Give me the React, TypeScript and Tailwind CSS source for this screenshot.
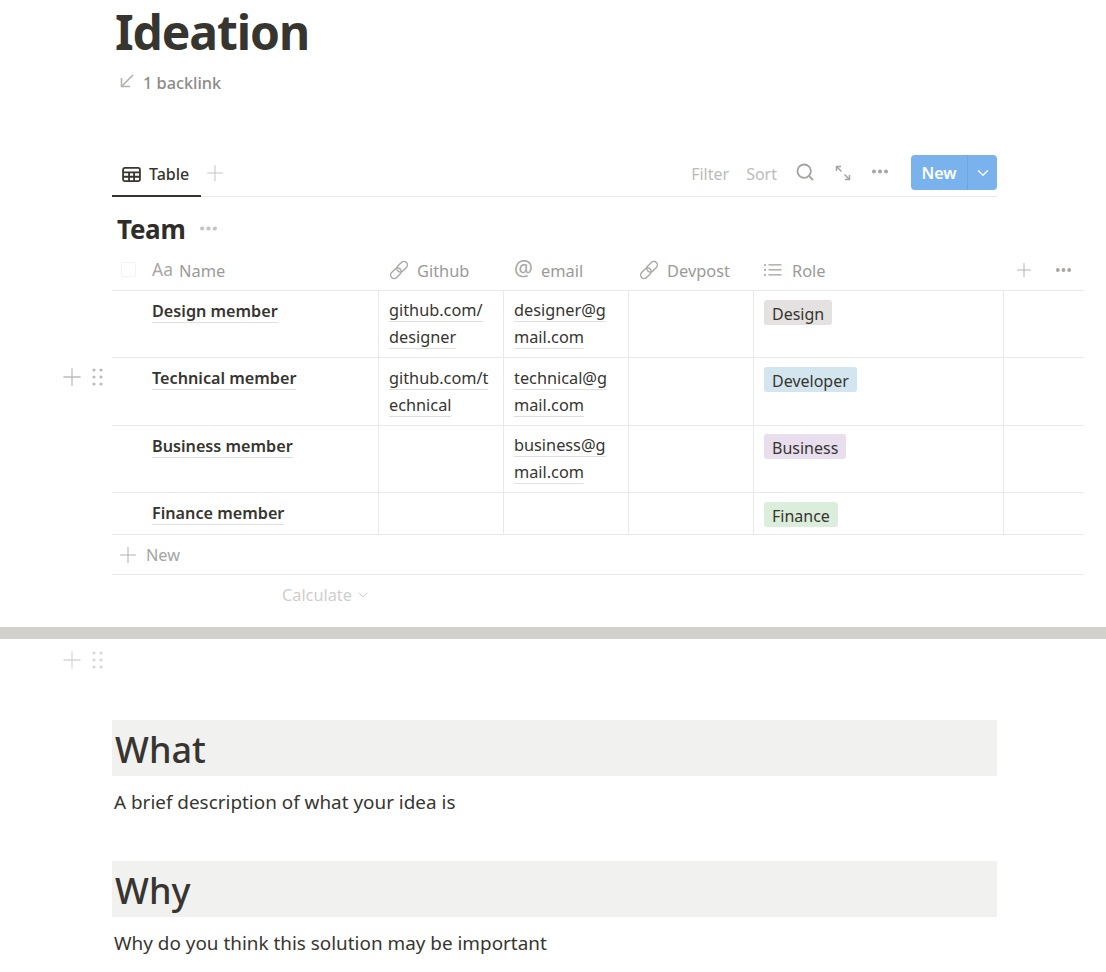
import React from 'react';
import { ChevronDown, Plus, Search } from 'lucide-react';

const font = "font-['Noto_Sans','Open_Sans',sans-serif]";

function Dots({ className = '' }: { className?: string }) {
    return (
        <svg viewBox="0 0 18 4" className={className} fill="currentColor">
            <circle cx="3" cy="2" r="2" />
            <circle cx="9" cy="2" r="2" />
            <circle cx="15" cy="2" r="2" />
        </svg>
    );
}

function Grip({ className = '' }: { className?: string }) {
    return (
        <svg viewBox="0 0 11 18" className={className} fill="currentColor">
            <circle cx="2" cy="2" r="1.6" />
            <circle cx="9" cy="2" r="1.6" />
            <circle cx="2" cy="9" r="1.6" />
            <circle cx="9" cy="9" r="1.6" />
            <circle cx="2" cy="16" r="1.6" />
            <circle cx="9" cy="16" r="1.6" />
        </svg>
    );
}

function LinkIcon() {
    return (
        <svg viewBox="0 0 20 20" className="w-[20px] h-[20px] -mt-[3px] text-[#a8a7a4]" fill="none" stroke="currentColor" strokeWidth="1.4">
            <rect x="9.6" y="0.8" width="7" height="12" rx="3.5" transform="rotate(45 13.1 6.8)" />
            <rect x="3.4" y="7.2" width="7" height="12" rx="3.5" transform="rotate(45 6.9 13.2)" />
        </svg>
    );
}

function ListIcon() {
    return (
        <svg viewBox="0 0 18 14" className="w-[18px] h-[14px] -mt-[3px] text-[#b5b4b1]" fill="currentColor">
            <rect x="0" y="1" width="2" height="2" />
            <rect x="0" y="6" width="2" height="2" />
            <rect x="0" y="11" width="2" height="2" />
            <rect x="4.5" y="1" width="13" height="1.6" />
            <rect x="4.5" y="6" width="13" height="1.6" />
            <rect x="4.5" y="11" width="13" height="1.6" />
        </svg>
    );
}

function TableIcon() {
    return (
        <svg viewBox="0 0 20 16" className="w-[19px] h-[15px] text-[#37352f]" fill="none" stroke="currentColor" strokeWidth="1.9">
            <rect x="1" y="1" width="18" height="14" rx="2" />
            <path d="M1 5.8h18M1 10.4h18M7.4 5.8V15M12.8 5.8V15" />
        </svg>
    );
}

function Link({ children }: { children: React.ReactNode }) {
    return <span className="border-b border-[#dfdfde] break-all">{children}</span>;
}

const rows = [
    { name: 'Design member', github: 'github.com/ designer', email: 'designer@gmail.com', role: 'Design', tag: 'bg-[#e3e2e0]', h: 'h-[67px]', cell: 'pt-[6px]', tagTop: 'pt-[9px]' },
    { name: 'Technical member', github: 'github.com/technical', email: 'technical@gmail.com', role: 'Developer', tag: 'bg-[#d3e5ef]', h: 'h-[68px]', cell: 'pt-[7px]', tagTop: 'pt-[9px]' },
    { name: 'Business member', github: '', email: 'business@gmail.com', role: 'Business', tag: 'bg-[#e8deee]', h: 'h-[67px]', cell: 'pt-[6px]', tagTop: 'pt-[8px]' },
    { name: 'Finance member', github: '', email: '', role: 'Finance', tag: 'bg-[#dbeddb]', h: 'h-[42px]', cell: 'pt-[7px]', tagTop: 'pt-[9px]' },
];

export default function App() {
    return (
        <div className={`${font} relative w-[1106px] h-[972px] overflow-hidden bg-white text-[#37352f]`}>
            <div className="pl-[112px]">
                {/* Title */}
                <h1 className="pl-[3px] pt-[2px] h-[60px] text-[48px] leading-[60px] font-bold tracking-[-1.1px] text-[#37352f]">Ideation</h1>
                <div className="flex items-center h-[28px] mt-[9px] pl-[8px] text-[16.3px] font-medium text-[#8c8b87]">
                    <svg viewBox="0 0 14 14" className="w-[14px] h-[14px] -mt-[4px] text-[#b3b2af]" fill="none" stroke="currentColor" strokeWidth="1.6">
                        <path d="M13 1 2 12M1.5 4v8.5H10" />
                    </svg>
                    <span className="ml-[9px]">1 backlink</span>
                </div>

                {/* Tabs and toolbar */}
                <div className="w-[885px] h-[42px] mt-[58px] flex justify-between border-b border-[#e9e9e7]">
                    <div className="flex">
                        <div className="w-[89px] h-[42px] pl-[10px] pb-[2px] flex items-center gap-[8px] border-b-2 border-[#37352f] text-[16px] font-medium">
                            <TableIcon />
                            <span>Table</span>
                        </div>
                        <Plus className="w-[26px] h-[26px] ml-[1px] mt-[5px] text-[#c8c7c5]" strokeWidth={1} />
                    </div>
                    <div className="flex items-start text-[16px] text-[#bcbbb9]">
                        <span className="mt-[7px] leading-[24px]">Filter</span>
                        <span className="ml-[17px] mt-[7px] leading-[24px]">Sort</span>
                        <Search className="w-[20px] h-[20px] ml-[18px] mt-[7px] text-[#a5a4a1]" strokeWidth={2.2} />
                        <svg viewBox="0 0 16 16" className="w-[16px] h-[16px] ml-[20px] mt-[10px] text-[#a5a4a1]" fill="none" stroke="currentColor" strokeWidth="1.5">
                            <path d="M1.5 6V1.5H6M1.5 1.5l5 5M14.5 10v4.5H10M14.5 14.5l-5-5" />
                        </svg>
                        <Dots className="w-[18px] h-[5px] ml-[20px] mt-[14px] text-[#a5a4a1]" />
                        <div className="ml-[22px] mt-[0px] w-[86px] h-[35px] flex rounded-[4px] bg-[#79b2ec] text-white">
                            <span className="w-[56px] text-center leading-[37px] font-semibold">New</span>
                            <span className="flex-1 border-l border-[#6ea5dc] flex items-center justify-center">
                                <ChevronDown className="w-[18px] h-[18px]" strokeWidth={1.8} />
                            </span>
                        </div>
                    </div>
                </div>

                {/* Table title */}
                <div className="flex items-center h-[54px] pl-[5px] pt-[10px]">
                    <span className="text-[26px] font-bold text-[#2f2d29] tracking-[-0.3px]">Team</span>
                    <Dots className="w-[19px] h-[5px] ml-[14px] -mt-[1px] text-[#c5c4c2]" />
                </div>

                {/* Table */}
                <div className="w-[972px] text-[16.3px]">
                    <div className="flex h-[40px] pt-[2px] border-b border-[#e9e9e7] text-[16.4px] text-[#9b9a97]">
                        <div className="w-[266px] flex items-center pl-[9px] relative">
                            <span className="w-[15px] h-[15px] border border-[#f3f3f2] rounded-[2px] -mt-[5px]" />
                            <span className="ml-[16px] text-[17.5px] text-[#a8a7a4] -mt-[4px]">Aa</span>
                            <span className="ml-[6px]">Name</span>
                        </div>
                        <div className="w-[125px] flex items-center pl-[11px] gap-[8px]"><LinkIcon /><span>Github</span></div>
                        <div className="w-[125px] flex items-center pl-[11px] gap-[8px]">
                            <span className="text-[21px] leading-none text-[#a8a7a4] -mt-[6px]">@</span>
                            <span>email</span>
                        </div>
                        <div className="w-[125px] flex items-center pl-[11px] gap-[8px]"><LinkIcon /><span>Devpost</span></div>
                        <div className="w-[250px] flex items-center pl-[11px] gap-[10px]"><ListIcon /><span>Role</span></div>
                        <div className="flex-1 flex items-center -mt-[3px]">
                            <Plus className="w-[22px] h-[22px] ml-[10px] text-[#b3b2af]" strokeWidth={1.1} />
                            <Dots className="w-[17px] h-[4px] ml-[20px] text-[#a5a4a1]" />
                        </div>
                    </div>

                    {rows.map((r) => (
                        <div key={r.name} className={`flex ${r.h} border-b border-[#e9e9e7] leading-[27px]`}>
                            <div className="w-[266px] pl-[40px] pt-[7px] text-[16.2px] font-semibold text-[#37352f]">
                                <span className="border-b border-[#dfdfde]">{r.name}</span>
                            </div>
                            <div className={`w-[125px] border-l border-[#e9e9e7] pl-[10px] pr-[10px] ${r.cell}`}>
                                {r.github && <Link>{r.github}</Link>}
                            </div>
                            <div className={`w-[125px] border-l border-[#e9e9e7] pl-[10px] pr-[10px] ${r.cell}`}>
                                {r.email && <Link>{r.email}</Link>}
                            </div>
                            <div className="w-[125px] border-l border-[#e9e9e7]" />
                            <div className={`w-[250px] border-l border-[#e9e9e7] pl-[10px] ${r.tagTop}`}>
                                <span className={`inline-block h-[25px] px-[8px] rounded-[3px] text-[16px] leading-[28px] ${r.tag}`}>{r.role}</span>
                            </div>
                            <div className="flex-1 border-l border-[#e9e9e7]" />
                        </div>
                    ))}

                    <div className="flex items-center h-[40px] border-b border-[#e9e9e7] pl-[3px] text-[#a5a4a1]">
                        <Plus className="w-[26px] h-[26px] text-[#b3b2af]" strokeWidth={1} />
                        <span className="ml-[5px] mt-[1px]">New</span>
                    </div>
                    <div className="flex items-center h-[40px] pl-[170px] text-[#cfcecc]">
                        <span>Calculate</span>
                        <ChevronDown className="w-[16px] h-[16px] ml-[3px]" strokeWidth={1.4} />
                    </div>
                </div>
            </div>

            {/* Divider */}
            <div className="h-[12px] mt-[12px] bg-[#d2d1cb]" />

            {/* Sections */}
            <div className="pl-[112px] pt-[81px]">
                <div className="w-[885px] h-[56px] pl-[3px] bg-[#f1f1ef] text-[36px] leading-[60px] font-medium text-[#37352f]">What</div>
                <p className="pl-[2px] mt-[11px] text-[18.9px] leading-[30px]">A brief description of what your idea is</p>
                <div className="w-[885px] h-[56px] pl-[3px] mt-[44px] bg-[#f1f1ef] text-[36px] leading-[60px] font-medium text-[#37352f]">Why</div>
                <p className="pl-[2px] mt-[11px] text-[18.9px] leading-[30px]">Why do you think this solution may be important</p>
            </div>

            {/* Hover handles in the page gutter */}
            <div className="absolute left-[58px] top-[363px] flex items-center gap-[6px] text-[#bdbcba]">
                <Plus className="w-[28px] h-[28px]" strokeWidth={1.1} />
                <Grip className="w-[11px] h-[18px]" />
            </div>
            <div className="absolute left-[58px] top-[646px] flex items-center gap-[6px] text-[#d9d8d6]">
                <Plus className="w-[28px] h-[28px]" strokeWidth={1.1} />
                <Grip className="w-[11px] h-[18px]" />
            </div>
        </div>
    );
}
